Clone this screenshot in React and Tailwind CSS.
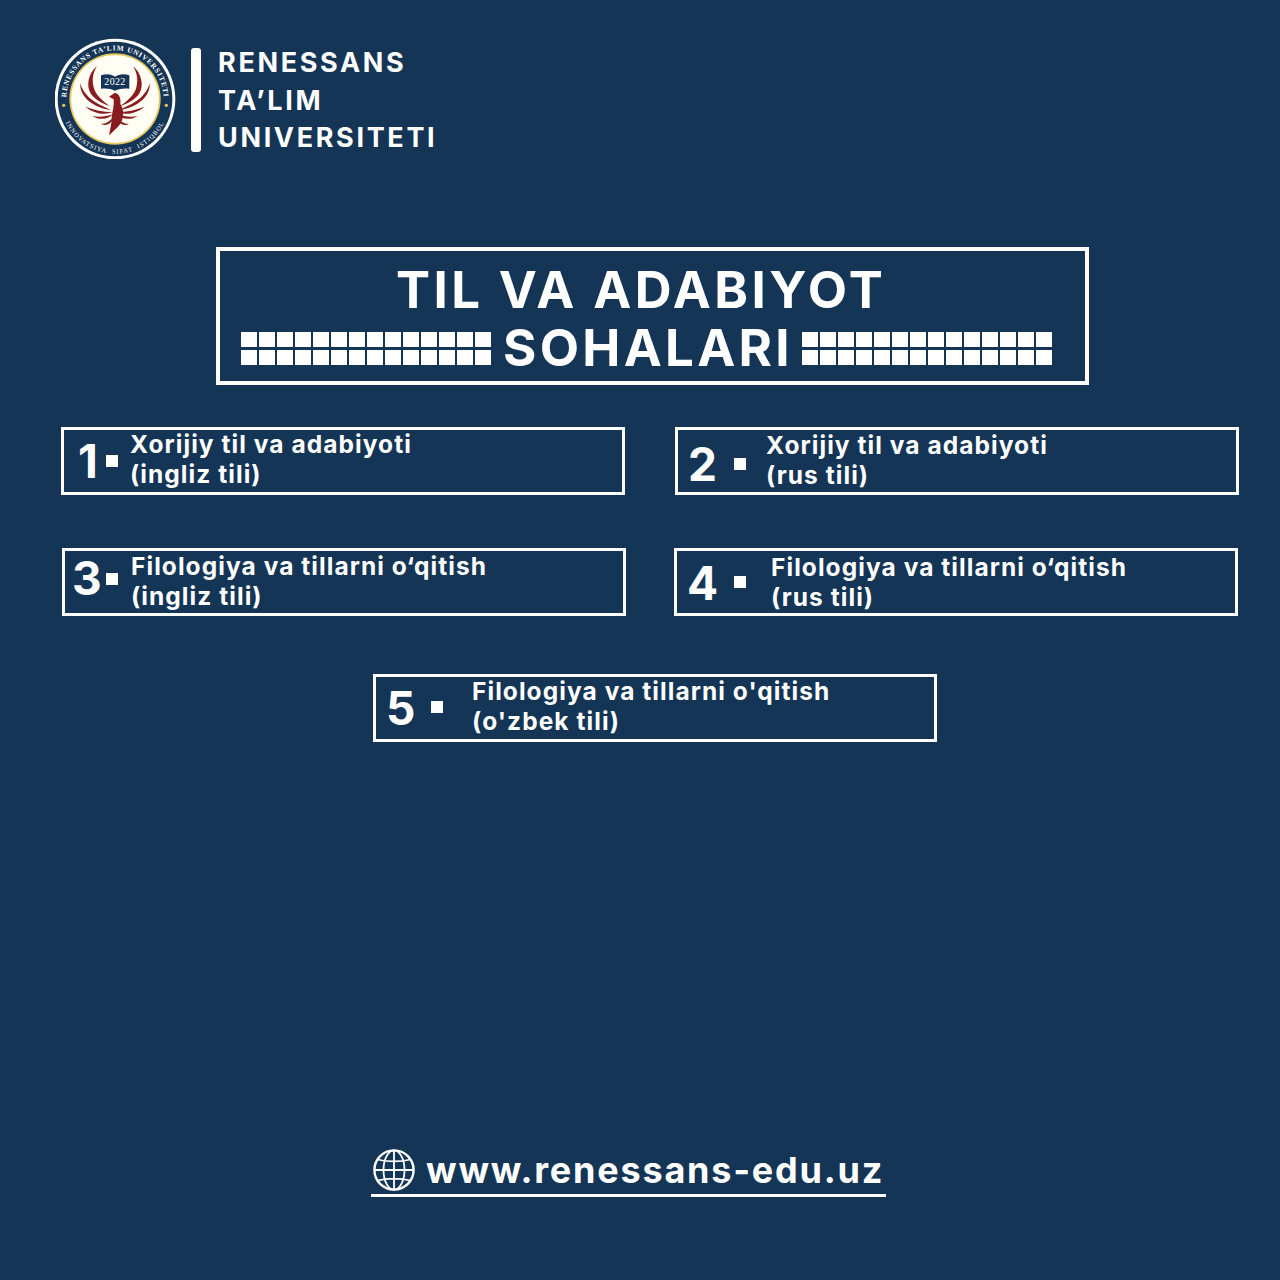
const font = { fontFamily: '"Inter", "Liberation Sans", sans-serif' };

function Logo() {
  const wing = (
    <g fill="#8a1c20">
      <path d="M168 108 C142 130 134 168 150 192 C162 208 182 220 206 228 C184 212 164 196 158 172 C152 148 156 128 168 108 Z" />
      <path d="M118 160 C116 186 132 208 156 222 C172 232 190 238 210 240 C184 228 158 216 142 200 C130 188 122 176 118 160 Z" />
      <path d="M134 230 C158 240 188 246 214 246 C194 256 158 252 134 230 Z" />
      <path d="M154 258 C172 262 196 260 216 252 C204 268 176 272 154 258 Z" />
      <path d="M180 282 C194 282 210 272 220 258 C216 276 198 292 180 282 Z" />
    </g>
  );
  return (
    <svg viewBox="42 21 366 366" className="w-[122px] h-[122px] shrink-0 block">
      <circle cx="222" cy="207" r="181" fill="#ffffff" />
      <circle cx="222" cy="207" r="172" fill="#143556" />
      <circle cx="222" cy="207" r="137" fill="#e7c65a" />
      <circle cx="222" cy="207" r="132" fill="#fffdf4" />
      <defs>
        <path id="logoTop" d="M76 207 A146 146 0 0 1 368 207" />
        <path id="logoBottom" d="M58 207 A164 164 0 0 0 386 207" />
      </defs>
      <text fontFamily="Liberation Serif, serif" fontWeight="700" fontSize="22" letterSpacing="2.4" fill="#ffffff">
        <textPath href="#logoTop" startOffset="50%" textAnchor="middle">RENESSANS TA’LIM UNIVERSITETI</textPath>
      </text>
      <text fontFamily="Liberation Serif, serif" fontWeight="400" fontSize="19" letterSpacing="3.2" fill="#ffffff">
        <textPath href="#logoBottom" startOffset="50%" textAnchor="middle">{"INNOVATSIYA\u00a0\u00a0SIFAT\u00a0\u00a0ISTIQBOL"}</textPath>
      </text>
      <circle cx="68" cy="226" r="5" fill="#e7c65a" />
      <circle cx="376" cy="226" r="5" fill="#e7c65a" />
      {wing}
      <g transform="translate(444 0) scale(-1 1)">{wing}</g>
      <path d="M204 200 L222 188 C236 192 240 206 238 222 C250 240 250 266 236 284 C226 296 214 306 204 316 C208 296 212 280 212 262 C214 244 220 226 218 208 Z" fill="#8a1c20" />
      <path d="M180 136 C196 130 212 132 222 140 C232 132 250 130 265 136 L265 176 C250 174 234 176 222 182 C210 176 196 174 180 176 Z" fill="#143556" />
      <text x="222" y="166" textAnchor="middle" fontFamily="Liberation Serif, serif" fontSize="30" letterSpacing="1" fill="#ffffff">2022</text>
    </svg>
  );
}

function Divider() {
  return (
    <div className="grid grid-cols-[repeat(14,16px)] grid-rows-[15px_15px] gap-x-[2px] gap-y-[3px] shrink-0">
      {Array.from({ length: 28 }, (_, i) => (
        <div key={i} className="bg-white" />
      ))}
    </div>
  );
}

function Card({ n, lines, className, numClass, dotClass, textClass }) {
  return (
    <div className={"relative w-[564px] h-[68px] border-[3px] border-white flex items-center shrink-0 " + className}>
      <span className={"text-[46px] leading-none font-bold text-white " + numClass}>{n}</span>
      <span className={"block w-[12px] h-[12px] bg-white shrink-0 " + dotClass} />
      <div className={"text-[24.5px] leading-[30px] font-bold text-white whitespace-nowrap tracking-[1.06px] " + textClass}>
        <div>{lines[0]}</div>
        <div>{lines[1]}</div>
      </div>
    </div>
  );
}

function Globe() {
  return (
    <svg viewBox="0 0 42 42" className="w-[42px] h-[42px] shrink-0" fill="none" stroke="#ffffff" strokeWidth="1.8">
      <circle cx="21" cy="21" r="19.6" strokeWidth="2.4" />
      <ellipse cx="21" cy="21" rx="10.5" ry="19.6" />
      <path d="M21 1.5 V40.5 M1.5 21 H40.5 M4.5 10.5 C14 13 28 13 37.5 10.5 M4.5 31.5 C14 29 28 29 37.5 31.5" />
    </svg>
  );
}

export default function App() {
  return (
    <div style={font} className="w-[1280px] h-[1280px] bg-[#143556] text-white overflow-hidden flex flex-col">
      <header className="flex items-start ml-[55px] mt-[37px]">
        <Logo />
        <div className="w-[10px] h-[104px] bg-white rounded-[3px] mt-[11px] ml-[14px]" />
        <div className="ml-[17px] mt-[7px] text-[27px] leading-[37.5px] font-bold tracking-[2.65px] whitespace-nowrap">
          <div>RENESSANS</div>
          <div>TA’LIM</div>
          <div>UNIVERSITETI</div>
        </div>
      </header>

      <section className="ml-[216px] mt-[88px] w-[873px] h-[138px] border-4 border-white flex flex-col shrink-0">
        <div className="text-[51px] leading-[60px] font-bold tracking-[3.4px] whitespace-nowrap ml-[176px] mt-[9px]">
          TIL VA ADABIYOT
        </div>
        <div className="flex items-center ml-[21px] mt-[-2px]">
          <Divider />
          <div className="text-[51px] leading-[60px] font-bold tracking-[3.3px] whitespace-nowrap ml-[12px] w-[299px]">SOHALARI</div>
          <Divider />
        </div>
      </section>

      <div className="flex mt-[42px] ml-[61px]">
        <Card n="1" lines={["Xorijiy til va adabiyoti", "(ingliz tili)"]} className="" numClass="ml-[14px] w-[28px]" dotClass="" textClass="ml-[12px] mt-[-5px]" />
        <Card n="2" lines={["Xorijiy til va adabiyoti", "(rus tili)"]} className="ml-[50px]" numClass="ml-[10px] w-[46px] mt-[5px]" dotClass="mt-[6px]" textClass="ml-[20px] mt-[-3px]" />
      </div>

      <div className="flex mt-[53px] ml-[62px]">
        <Card n="3" lines={["Filologiya va tillarni o‘qitish", "(ingliz tili)"]} className="" numClass="ml-[7px] w-[34px] mt-[-8px]" dotClass="mt-[-6px]" textClass="ml-[13px] mt-[-2px]" />
        <Card n="4" lines={["Filologiya va tillarni o‘qitish", "(rus tili)"]} className="ml-[48px]" numClass="ml-[10px] w-[47px] mt-[1px]" dotClass="" textClass="ml-[25px] mt-[-1px]" />
      </div>

      <div className="flex mt-[58px] ml-[373px]">
        <Card n="5" lines={["Filologiya va tillarni o'qitish", "(o'zbek tili)"]} className="" numClass="ml-[10px] w-[45px] mt-[-1px]" dotClass="mt-[-3px]" textClass="ml-[29px] mt-[-5px]" />
      </div>

      <footer className="mt-[407px] ml-[371px] w-[515px] h-[48px] border-b-[3px] border-white flex items-start shrink-0">
        <div className="ml-[2px]"><Globe /></div>
        <span className="ml-[11px] text-[36px] leading-[42px] font-bold tracking-[1.78px] whitespace-nowrap">www.renessans-edu.uz</span>
      </footer>
    </div>
  );
}
